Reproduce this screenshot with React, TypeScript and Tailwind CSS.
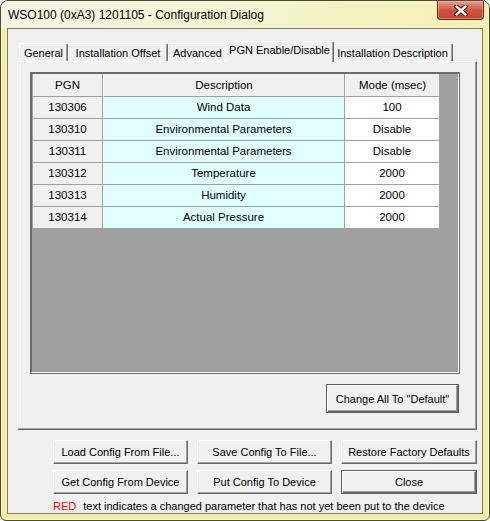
import React from 'react';
import clsx from 'clsx';

const rows = [
  { pgn: '130306', description: 'Wind Data', mode: '100' },
  { pgn: '130310', description: 'Environmental Parameters', mode: 'Disable' },
  { pgn: '130311', description: 'Environmental Parameters', mode: 'Disable' },
  { pgn: '130312', description: 'Temperature', mode: '2000' },
  { pgn: '130313', description: 'Humidity', mode: '2000' },
  { pgn: '130314', description: 'Actual Pressure', mode: '2000' },
];

const tabs = [
  { label: 'General', width: 'w-[49px]' },
  { label: 'Installation Offset', width: 'w-[100px]' },
  { label: 'Advanced', width: 'w-[59px]' },
  { label: 'PGN Enable/Disable', width: 'w-[109px]', active: true },
  { label: 'Installation Description', width: 'w-[121px]' },
];

interface DialogButtonProps {
  children: React.ReactNode;
  isDefault?: boolean;
  className?: string;
}

const DialogButton: React.FC<DialogButtonProps> = ({ children, isDefault, className }) => (
  <button
    className={clsx(
      'flex items-stretch bg-[#f0f0f0] p-0 text-[11px] leading-[14px] text-black',
      isDefault && 'border border-[#5f5f5f]',
      className
    )}
  >
    <span className="flex flex-1 items-center justify-center border-t border-l border-r border-b border-t-white border-l-white border-r-[#696969] border-b-[#696969] shadow-[inset_-1px_-1px_0_#a0a0a0]">
      {children}
    </span>
  </button>
);

const CloseGlyph = () => (
  <svg width="14" height="11" viewBox="0 0 14 11">
    <path d="M2.5 1.5 L11.5 9.5 M11.5 1.5 L2.5 9.5" stroke="#3d1810" strokeWidth="4.4" strokeLinecap="round" fill="none" />
    <path d="M2.5 1.5 L11.5 9.5 M11.5 1.5 L2.5 9.5" stroke="#ffffff" strokeWidth="2.4" strokeLinecap="round" fill="none" />
  </svg>
);

const PgnGrid: React.FC = () => (
  <div className="h-[302px] w-[430px] border border-[#6b6b6b]">
    <div className="flex h-full flex-col border-t border-l border-r border-b border-t-[#6b6b6b] border-l-[#6b6b6b] border-r-white border-b-white bg-[#a0a0a0] pl-px">
      <div className="flex h-[23px] shrink-0">
        <div className="flex w-[70px] items-center justify-center border-r border-b border-r-[#a0a0a0] border-b-[#a0a0a0] bg-[#f0f0f0] pt-[2px]">PGN</div>
        <div className="flex w-[242px] items-center justify-center border-r border-b border-l border-l-white border-r-[#a0a0a0] border-b-[#a0a0a0] bg-[#f0f0f0] pt-[2px]">Description</div>
        <div className="flex w-[95px] items-center justify-center border-r border-b border-l border-l-white border-r-[#a0a0a0] border-b-[#a0a0a0] bg-[#f0f0f0] pt-[2px]">Mode (msec)</div>
      </div>
      {rows.map((row) => (
        <div key={row.pgn} className="flex h-[22px] shrink-0">
          <div className="flex w-[70px] items-center justify-center border-r border-b border-r-[#a0a0a0] border-b-[#a0a0a0] bg-[#f0f0f0]">{row.pgn}</div>
          <div className="flex w-[242px] items-center justify-center border-r border-b border-r-[#a0a0a0] border-b-[#a0a0a0] bg-[#e0ffff]">{row.description}</div>
          <div className="flex w-[95px] items-center justify-center border-r border-b border-r-[#a0a0a0] border-b-[#a0a0a0] bg-white">{row.mode}</div>
        </div>
      ))}
    </div>
  </div>
);

export default function App() {
  return (
    <div className="flex h-[521px] w-[490px] flex-col rounded-t-[8px] rounded-b-[6px] border border-[#4a4a3c] bg-[#f3f0a6] font-['Liberation_Sans',Arial,sans-serif] text-[11.5px] text-black shadow-[inset_0_0_0_1px_rgba(255,255,255,0.55)]">
      {/* title bar */}
      <div className="flex h-[27px] shrink-0 items-start rounded-t-[7px] bg-linear-to-r from-[#f5f4e4] via-[#f6f4d0] to-[#f4f1b2]">
        <span className="pl-[7px] pt-[7px] text-[12px] leading-[15px] text-black">
          WSO100 (0xA3) 1201105 - Configuration Dialog
        </span>
        <div className="ml-auto mr-[5px] flex h-[19px] w-[47px] items-center justify-center rounded-b-[4px] border border-t-0 border-[#6a2a20] bg-linear-to-b from-[#e6a091] via-[#cf5540] to-[#c0432d] shadow-[inset_0_0_0_1px_rgba(255,200,180,0.45)]">
          <CloseGlyph />
        </div>
      </div>

      {/* client area */}
      <div className="mx-[6px] mb-[6px] flex flex-1 flex-col border border-[#7c7b6a] bg-[#f0f0f0]">
        {/* tab control */}
        <div className="ml-[9px] mt-[12px] flex w-[460px] flex-col">
          <div className="flex h-[20px] items-end pl-[2px] text-[11px]">
            {tabs.map((tab) =>
              tab.active ? (
                <div
                  key={tab.label}
                  className={clsx(
                    tab.width,
                    'relative z-10 -mx-[2px] -mb-px flex h-[21px] justify-center rounded-t-[2px] border-t border-l border-r border-t-white border-l-white border-r-[#696969] bg-[#f0f0f0] pt-px leading-[14px] shadow-[inset_-1px_0_0_#a0a0a0]'
                  )}
                >
                  {tab.label}
                </div>
              ) : (
                <div
                  key={tab.label}
                  className={clsx(
                    tab.width,
                    'flex h-[18px] justify-center rounded-t-[2px] border-t border-l border-r border-t-white border-l-white border-r-[#696969] bg-[#f0f0f0] pt-[2px] leading-[14px] shadow-[inset_-1px_0_0_#a0a0a0]'
                  )}
                >
                  {tab.label}
                </div>
              )
            )}
          </div>
          <div className="flex h-[369px] flex-col border-t border-l border-r border-b border-t-white border-l-white border-r-[#696969] border-b-[#696969] bg-[#f0f0f0] pl-[12px] pt-[10px] shadow-[inset_-1px_-1px_0_#a0a0a0]">
            <div className="flex w-[430px] flex-col">
              <PgnGrid />
              <DialogButton isDefault className="mr-px mt-[10px] h-[29px] w-[133px] self-end">
                Change All To "Default"
              </DialogButton>
            </div>
          </div>
        </div>

        {/* bottom buttons */}
        <div className="ml-[45px] mt-[10px] grid grid-cols-[135px_135px_136px] gap-x-[9px] gap-y-[6px]">
          <DialogButton className="h-[24px]">Load Config From File...</DialogButton>
          <DialogButton className="h-[24px]">Save Config To File...</DialogButton>
          <DialogButton className="h-[24px]">Restore Factory Defaults</DialogButton>
          <DialogButton className="h-[24px]">Get Config From Device</DialogButton>
          <DialogButton className="h-[24px]">Put Config To Device</DialogButton>
          <DialogButton isDefault className="h-[24px]">Close</DialogButton>
        </div>
        <div className="ml-[45px] mt-[5px] flex text-[11px] leading-[14px]">
          <span className="text-[#ff0000]">RED</span>
          <span className="ml-[7px]">text indicates a changed parameter that has not yet been put to the device</span>
        </div>
      </div>
    </div>
  );
}
